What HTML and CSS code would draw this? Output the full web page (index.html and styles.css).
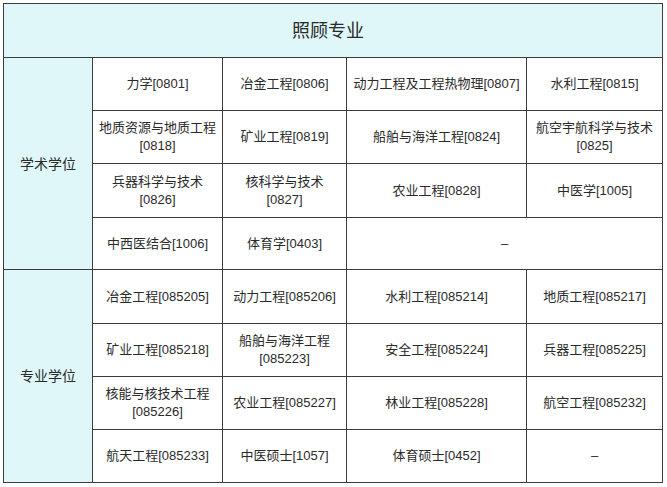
FILE: index.html
```html
<!DOCTYPE html>
<html lang="zh">
<head>
<meta charset="utf-8">
<link rel="stylesheet" href="styles.css">
<title>照顾专业</title>
</head>
<body>
<div class="table">
  <div class="cell title">照顾专业</div>

  <div class="cell group g1">学术学位</div>
  <div class="cell">力学[0801]</div>
  <div class="cell">冶金工程[0806]</div>
  <div class="cell">动力工程及工程热物理[0807]</div>
  <div class="cell">水利工程[0815]</div>
  <div class="cell">地质资源与地质工程<br>[0818]</div>
  <div class="cell">矿业工程[0819]</div>
  <div class="cell">船舶与海洋工程[0824]</div>
  <div class="cell">航空宇航科学与技术<br>[0825]</div>
  <div class="cell">兵器科学与技术<br>[0826]</div>
  <div class="cell">核科学与技术<br>[0827]</div>
  <div class="cell">农业工程[0828]</div>
  <div class="cell">中医学[1005]</div>
  <div class="cell">中西医结合[1006]</div>
  <div class="cell">体育学[0403]</div>
  <div class="cell wide">–</div>

  <div class="cell group g2">专业学位</div>
  <div class="cell">冶金工程[085205]</div>
  <div class="cell">动力工程[085206]</div>
  <div class="cell">水利工程[085214]</div>
  <div class="cell">地质工程[085217]</div>
  <div class="cell">矿业工程[085218]</div>
  <div class="cell">船舶与海洋工程<br>[085223]</div>
  <div class="cell">安全工程[085224]</div>
  <div class="cell">兵器工程[085225]</div>
  <div class="cell">核能与核技术工程<br>[085226]</div>
  <div class="cell">农业工程[085227]</div>
  <div class="cell">林业工程[085228]</div>
  <div class="cell">航空工程[085232]</div>
  <div class="cell">航天工程[085233]</div>
  <div class="cell">中医硕士[1057]</div>
  <div class="cell">体育硕士[0452]</div>
  <div class="cell">–</div>
</div>
</body>
</html>
```

FILE: styles.css
```css
html, body {
  margin: 0;
  padding: 0;
  background: #ffffff;
}

body {
  padding: 3px 0 0 3px;
  font-family: "Liberation Sans", "Noto Sans CJK SC", sans-serif;
  color: #2a2a2a;
}

.table {
  width: 660px;
  box-sizing: border-box;
  display: grid;
  grid-template-columns: 88px 129px 123px 179px 135px;
  grid-template-rows: 53px 52px 52px 53px 51px 53px 52px 52px 52px;
  gap: 1px;
  padding: 1px;
  background: #3c3c3c;
}

.cell {
  background: #ffffff;
  display: flex;
  align-items: center;
  justify-content: center;
  text-align: center;
  font-size: 13px;
  line-height: 18px;
}

.title {
  grid-column: 1 / -1;
  background: #e0f7f9;
  font-size: 18px;
  padding-right: 10px;
}

.group {
  grid-column: 1;
  background: #e0f7f9;
  font-size: 14px;
}

.g1 {
  grid-row: 2 / span 4;
}

.g2 {
  grid-row: 6 / span 4;
}

.wide {
  grid-column: span 2;
}
```
